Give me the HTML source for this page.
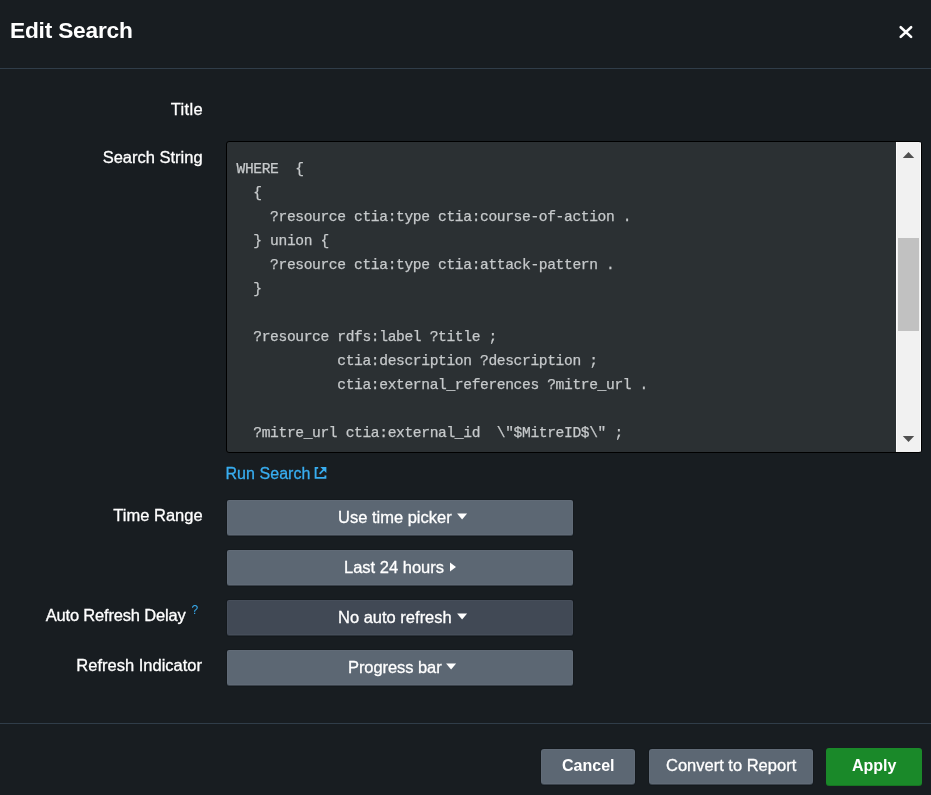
<!DOCTYPE html>
<html>
<head>
<meta charset="utf-8">
<title>Edit Search</title>
<style>
html,body{margin:0;padding:0;}
body{width:931px;height:795px;background:#181d21;overflow:hidden;position:relative;
  font-family:"Liberation Sans",sans-serif;color:#fff;font-size:16.5px;}
#wrap{position:absolute;left:0;top:0;width:931px;height:795px;will-change:transform;}
.abs{position:absolute;white-space:nowrap;}
.t{position:absolute;white-space:nowrap;line-height:20px;-webkit-text-stroke:0.3px;}
#title{left:10px;top:17px;font-size:22.7px;letter-spacing:-0.2px;font-weight:bold;line-height:26px;}
#hline{left:0;top:68px;width:931px;height:1px;background:#303d49;}
#fline{left:0;top:723px;width:931px;height:1px;background:#303d49;}
.lbl{right:728.4px;text-align:right;font-size:16.5px;}
#ta{left:226px;top:141px;width:694px;height:310px;border:1px solid #000;border-radius:3px;background:#2b3033;overflow:hidden;}
#code{left:9.5px;top:15px;-webkit-text-stroke:0.25px #c6c9cb;margin:0;font-family:"Liberation Mono",monospace;font-size:14.6px;letter-spacing:-0.36px;line-height:24px;color:#c6c9cb;white-space:pre;}
#sb{left:669px;top:0;width:25px;height:310px;background:#f1f1f1;box-shadow:inset 1px 0 0 #fcfcfc, inset -1px 0 0 #fcfcfc;}
#thumb{left:2px;top:96px;width:21px;height:93px;background:#c1c1c1;}
.btn{left:227px;width:346px;height:35px;background:#5c6773;border-radius:2px;
  box-shadow:inset 0 0 0 1px rgba(255,255,255,.03), 0 1px 0 #3a424b, 0 0 0 1px #14191d, 0 2px 0 #14191d;}
.btn.dis{background:#414955;box-shadow:inset 0 0 0 1px rgba(255,255,255,.03), 0 1px 0 #2c333b, 0 0 0 1px #14191d, 0 2px 0 #14191d;}
.btn .t{top:7px;}
.fbtn{height:35px;top:749px;border-radius:3px;background:#5c6773;box-shadow:inset 0 0 0 1px rgba(255,255,255,.03), 0 1px 0 #3a424b, 0 0 0 1px #14191d, 0 2px 0 #14191d;}
.fbtn .t{top:7px;}
.link{color:#38adf0;}
</style>
</head>
<body>
<div id="wrap">
<div class="abs" id="title">Edit Search</div>
<svg class="abs" style="left:898px;top:24px" width="16" height="16" viewBox="0 0 16 16"><path d="M2.7 3.2 L13.1 12.9 M13.1 3.2 L2.7 12.9" stroke="#fff" stroke-width="2.6" stroke-linecap="round" fill="none"/></svg>
<div class="abs" id="hline"></div>

<div class="t lbl" style="top:99px;letter-spacing:0.35px;right:728px">Title</div>
<div class="t lbl" style="top:147px">Search String</div>

<div class="abs" id="ta">
<pre class="abs" id="code">WHERE  {
  {
    ?resource ctia:type ctia:course-of-action .
  } union {
    ?resource ctia:type ctia:attack-pattern .
  }

  ?resource rdfs:label ?title ;
            ctia:description ?description ;
            ctia:external_references ?mitre_url .

  ?mitre_url ctia:external_id  \"$MitreID$\" ;</pre>
<div class="abs" id="sb">
  <svg class="abs" style="left:6px;top:9px" width="13" height="8" viewBox="0 0 13 8"><path d="M0.8 7 L6.5 1 L12.2 7 Z" fill="#505050"/></svg>
  <div class="abs" id="thumb"></div>
  <svg class="abs" style="left:6px;top:294px" width="13" height="7" viewBox="0 0 13 7"><path d="M0.8 0 L6.5 6.1 L12.2 0 Z" fill="#505050"/></svg>
</div>
</div>

<div class="t link" style="left:225.5px;top:464px;font-size:16px;letter-spacing:0.05px">Run Search</div>
<svg class="abs" style="left:314px;top:466px" width="14" height="14" viewBox="0 0 14 14"><path d="M4.2 1.9 H1.6 V11.9 H11.4 V9.6" stroke="#38adf0" stroke-width="1.9" fill="none"/><path d="M6.3 1 H12.4 V7.1 Z" fill="#38adf0"/><path d="M10.5 2.9 L5.6 7.8" stroke="#38adf0" stroke-width="1.7" fill="none"/></svg>

<div class="t lbl" style="top:505px">Time Range</div>
<div class="abs btn" style="top:500px"><span class="t" style="left:111px">Use time picker</span><svg class="abs" style="left:229.6px;top:13px" width="11" height="7" viewBox="0 0 11 7"><path d="M0.1 0.6 H10.1 L5.1 6.4 Z" fill="#fff"/></svg></div>
<div class="abs btn" style="top:550px"><span class="t" style="left:117px">Last 24 hours</span><svg class="abs" style="left:223px;top:12px" width="7" height="10" viewBox="0 0 7 10"><path d="M0 0.4 V9.6 L6 5 Z" fill="#fff"/></svg></div>
<div class="t lbl" style="top:605px;right:745.5px;letter-spacing:-0.18px">Auto Refresh Delay</div>
<div class="t link" style="left:191.5px;top:600px;font-size:12px;-webkit-text-stroke:0;">?</div>
<div class="abs btn dis" style="top:600px"><span class="t" style="left:111px">No auto refresh</span><svg class="abs" style="left:229.6px;top:13px" width="11" height="7" viewBox="0 0 11 7"><path d="M0.1 0.6 H10.1 L5.1 6.4 Z" fill="#fff"/></svg></div>
<div class="t lbl" style="top:655px;right:729px">Refresh Indicator</div>
<div class="abs btn" style="top:650px"><span class="t" style="left:121px;letter-spacing:-0.07px">Progress bar</span><svg class="abs" style="left:219.1px;top:13px" width="11" height="7" viewBox="0 0 11 7"><path d="M0.1 0.6 H10.1 L5.1 6.4 Z" fill="#fff"/></svg></div>

<div class="abs" id="fline"></div>
<div class="abs fbtn" style="left:541px;width:94px;"><span class="t" style="left:21px;font-weight:bold;font-size:16px;-webkit-text-stroke:0">Cancel</span></div>
<div class="abs fbtn" style="left:649px;width:164px;"><span class="t" style="left:17px;top:6px">Convert to Report</span></div>
<div class="abs fbtn" style="left:826px;width:96px;top:748px;height:38px;background:#1a8929;box-shadow:inset 0 -1px 0 rgba(0,0,0,.15);"><span class="t" style="left:26px;top:8px;font-weight:bold;font-size:16px;-webkit-text-stroke:0">Apply</span></div>
</div>
</body>
</html>
